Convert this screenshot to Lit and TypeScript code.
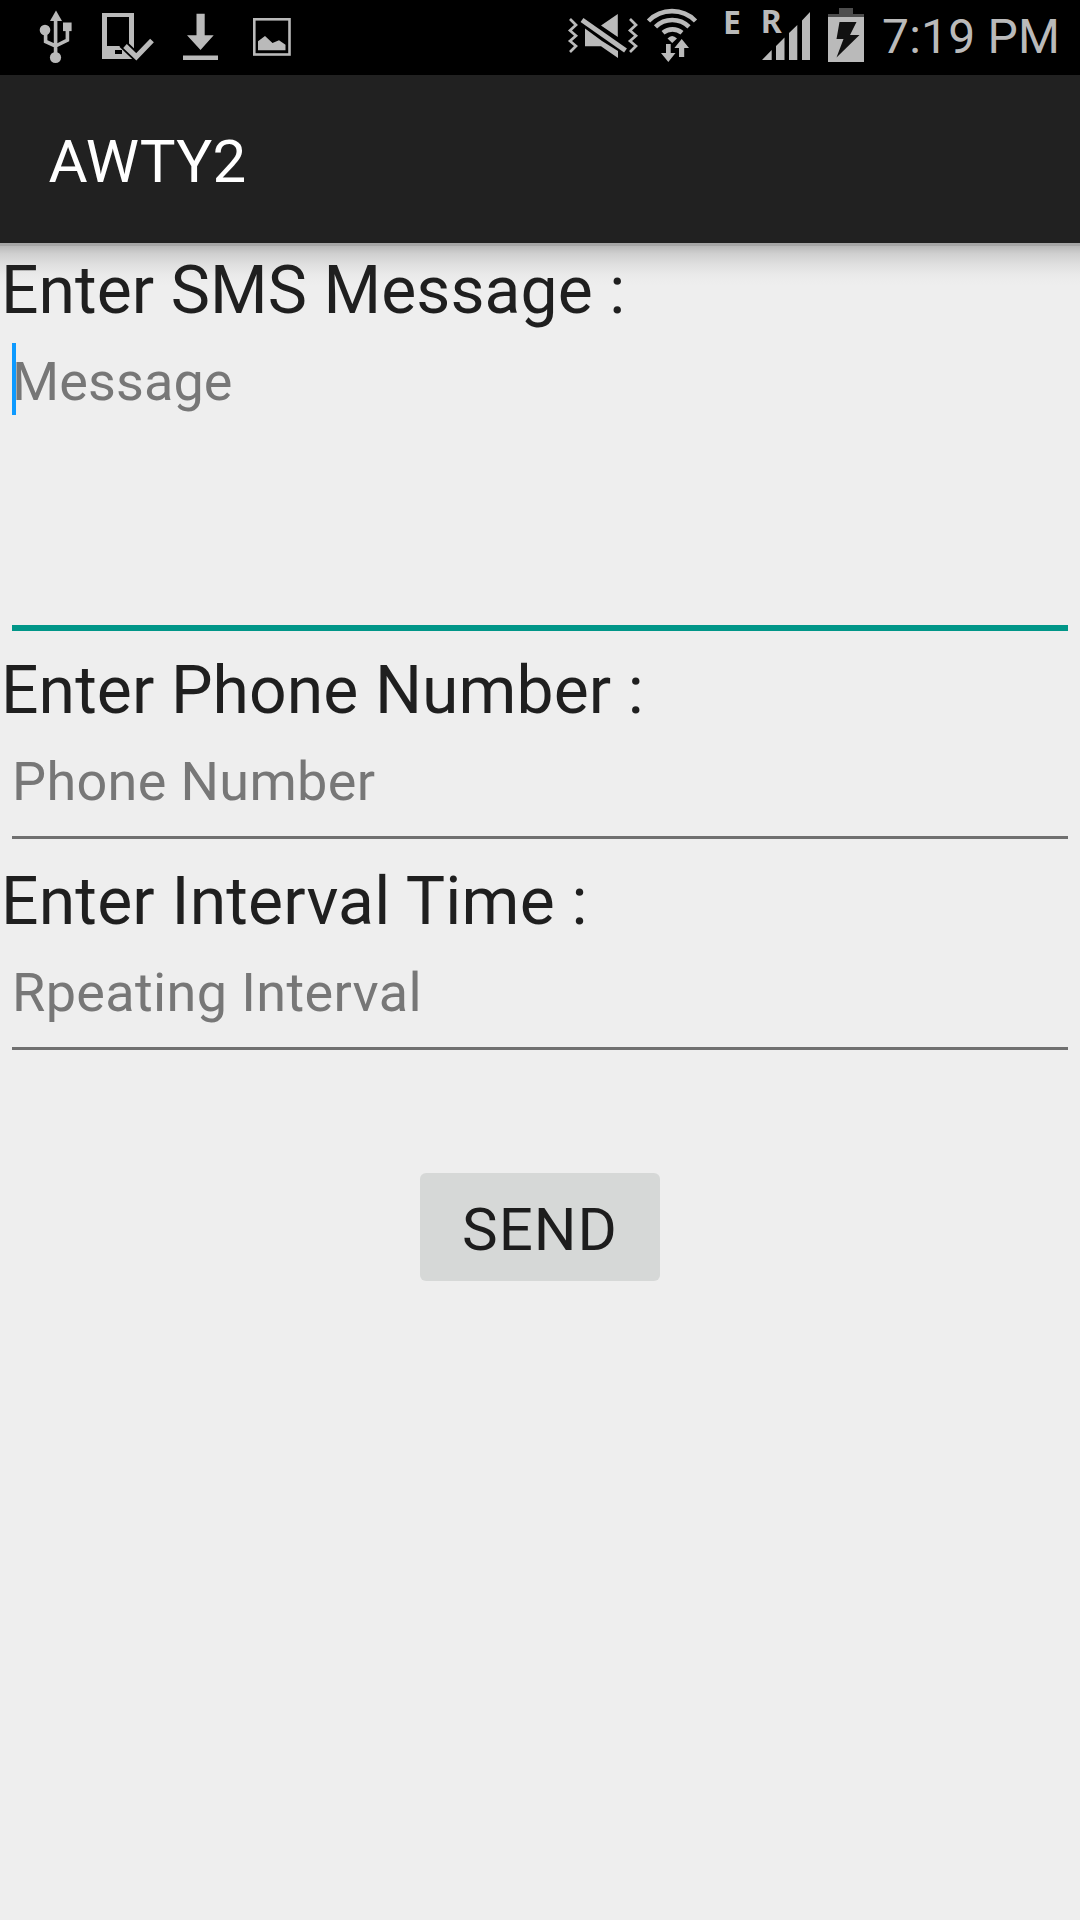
import { LitElement, html, css, svg } from "lit";
import { customElement, property } from "lit/decorators.js";

@customElement("status-bar")
class StatusBar extends LitElement {
  static styles = css`
    :host { display: flex; height: 75px; background: #000; color: #bababa; font-family: Roboto, sans-serif; }
    svg { display: block; height: 75px; fill: #bababa; flex: none; }
    .left { width: 300px; }
    .right { width: 320px; margin-left: 262px; }
    .clock { font-size: 48px; line-height: 73px; white-space: nowrap; letter-spacing: 0.2px; }
    .tag { font: 700 32px "Noto Sans", sans-serif; }
    .line { fill: none; stroke: #bababa; }
    .gap { fill: none; stroke: #000; }
    .dim { fill: #4d4d4d; }
    .dark { fill: #111; }
  `;
  render() {
    return html`
      <svg class="left" viewBox="0 0 300 75">${svg`
        <path d="M56 10.5 62 21H50Z"/>
        <path class="line" stroke-width="3.6" d="M55.6 20V55M45.6 30V41.5L55.6 46M67.4 30V40.2L55.6 46"/>
        <circle cx="45" cy="30" r="5.3"/><rect x="63" y="22.5" width="8.6" height="8.6"/>
        <circle cx="55.5" cy="57.5" r="5.6"/>
        <path fill-rule="evenodd" d="M102 13H134V59H102ZM107 17V46H129V17ZM115 50V54H122V50Z"/>
        <path class="gap" stroke-width="9" d="M122.500 43.500 136 56.500 154 38"/>
        <path class="line" stroke-width="5.2" d="M125 46 136.300 56.800 152 40.500"/>
        <path d="M196.500 13.700H204.700V35.300H213.700L200.500 50 187 35.300H196.500ZM183 55.600H218V60H183Z"/>
        <rect class="line" x="254.300" y="19.300" width="35.200" height="35.200" stroke-width="2.600"/>
        <path d="M258 50.300V41.300L265 36 272.500 43 279 40.300 285.500 44.700V50.300Z"/>
      `}</svg>
      <svg class="right" viewBox="562 0 320 75">${svg`
        <path class="line" stroke-width="2.700" d="M570 19 576 25 570 30.500 576 35.700 570 41 576 46 570 52"/>
        <path class="line" stroke-width="2.700" d="M630 19 636 25 630 30.500 636 35.700 630 41 636 46 630 52"/>
        <path d="M585 28.500 602 41 618 51V58L601 46.300H585ZM617.800 14V37L601 25.500Z"/>
        <path class="line" stroke-width="5" d="M582 20 625.500 50.500"/>
        <path class="line" stroke-width="4.600" d="M648.500 21A33 33 0 0 1 695.500 21M655.500 26.800A24 24 0 0 1 689 26.800M663 32.800A15 15 0 0 1 682 32.800"/>
        <path d="M667.500 38.500Q672 33.500 677 38.500L672.200 43ZM666 44H670.700V53H675.500L668.300 62 661 53H666ZM681.700 39 689 48H684.200V57H679V48H674.400Z"/>
        <text class="tag" x="723" y="34.400">E</text><text class="tag" x="760.700" y="33.300">R</text>
        <path d="M762 60 771.700 50V60ZM776 60V46L784.500 37.500V60ZM789 60V33L797.300 25V60ZM802 60V20.500L810 12V60Z"/>
        <path class="dim" d="M828 17V14H839V8H853V14H864V17Z"/>
        <rect x="828" y="17" width="36" height="45"/>
        <path class="dark" d="M839.500 22H856.500L850 35H859.500L836.500 57.500 843.500 39H836.500Z"/>
      `}</svg>
      <span class="clock">7:19 PM</span>`;
  }
}

@customElement("form-row")
class FormRow extends LitElement {
  @property() label = "";
  @property() hint = "";
  @property({ type: Boolean, reflect: true }) active = false;
  static styles = css`
    :host { display: block; font-family: Roboto, sans-serif; }
    .label { padding-left: 1px; font-size: 66px; line-height: 96px; height: 94px; color: #1f1f1f; white-space: nowrap; letter-spacing: var(--label-track, 0); }
    .field { display: flex; box-sizing: border-box; height: 102px; margin: 0 12px 15px; border-bottom: 3px solid #707070; }
    .hint { font-size: 54px; line-height: 89px; color: #777; white-space: nowrap; letter-spacing: var(--hint-track, 0); }
    .caret { width: 4px; height: 72px; margin: 6px -4px 0 0; background: #0d9aff; }
    :host([active]) .field { height: 294px; margin-bottom: 12px; border-bottom: 6px solid #009688; }
  `;
  render() {
    return html`<div class="label">${this.label}</div>
      <div class="field">${this.active ? html`<i class="caret"></i>` : ""}<span class="hint">${this.hint}</span></div>`;
  }
}

@customElement("app-root")
class AppRoot extends LitElement {
  static styles = css`
    :host { display: flex; flex-direction: column; height: 1920px; background: #eee; font-family: Roboto, sans-serif; overflow: hidden; }
    .appbar { flex: none; height: 168px; box-sizing: border-box; padding-left: 48.5px; background: #212121; color: #fff; font-size: 60px; line-height: 173px; letter-spacing: 0.25px; }
    .content { flex: 1; display: flex; flex-direction: column;
      background: linear-gradient(#a6a6a6 0 3px, #b9b9b9 3px, #d0d0d0 11px, #e0e0e0 22px, #eaeaea 32px, #eee 42px); }
    .message { --label-track: 0.08px; --hint-track: 0.1px; }
    .phone { --label-track: 0.1px; --hint-track: 0.33px; }
    .interval { --label-track: 0.2px; --hint-track: 0.36px; }
    .send { align-self: center; margin-top: 108px; width: 240px; height: 108px; border: 0; padding: 0; border-radius: 6px; background: #d6d8d7; color: #1d1d1d; font: 60px/113px Roboto, sans-serif; letter-spacing: 1px; }
  `;
  render() {
    return html`<status-bar></status-bar>
      <header class="appbar">AWTY2</header>
      <main class="content">
        <form-row class="message" active label="Enter SMS Message :" hint="Message"></form-row>
        <form-row class="phone" label="Enter Phone Number :" hint="Phone Number"></form-row>
        <form-row class="interval" label="Enter Interval Time :" hint="Rpeating Interval"></form-row>
        <button class="send">SEND</button>
      </main>`;
  }
}
